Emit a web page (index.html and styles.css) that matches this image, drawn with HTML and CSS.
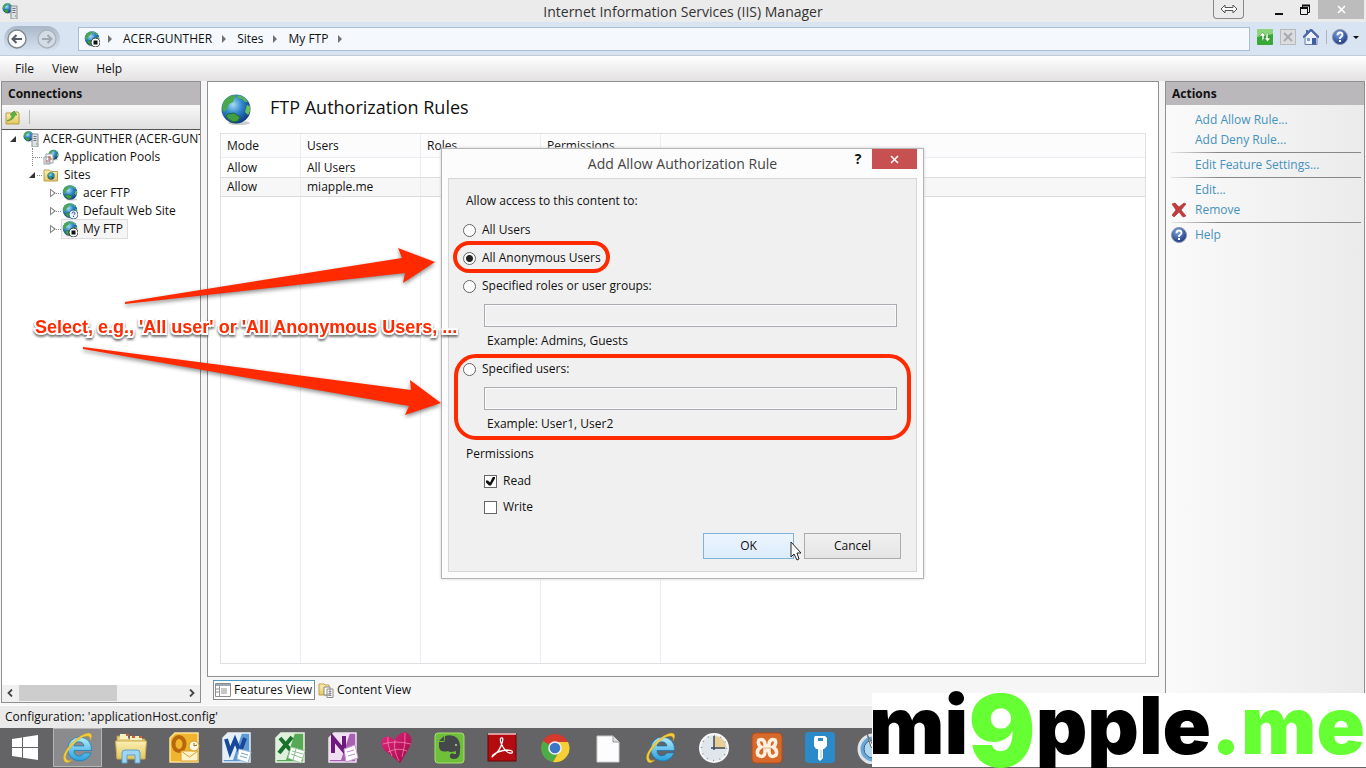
FILE: index.html
```html
<!DOCTYPE html>
<html lang="en">
  <head>
    <meta charset="UTF-8" />
    <meta name="viewport" content="width=device-width, initial-scale=1.0" />
    <title>Internet Information Services (IIS) Manager</title>
    <link rel="stylesheet" href="styles.css">
  </head>
  <body>
    <!-- shared icons -->
    <svg class="sprite" width="0" height="0" aria-hidden="true">
      <defs>
        <radialGradient id="sea" cx="40%" cy="35%" r="70%">
          <stop offset="0" stop-color="#a5dcf5" />
          <stop offset="0.45" stop-color="#2f86cc" />
          <stop offset="1" stop-color="#0c3278" />
        </radialGradient>
        <linearGradient id="ieBlue" x1="0" y1="0" x2="0" y2="1">
          <stop offset="0" stop-color="#b5ecfc" />
          <stop offset="1" stop-color="#25a0dd" />
        </linearGradient>
        <linearGradient id="folderYellow" x1="0" y1="0" x2="0" y2="1">
          <stop offset="0" stop-color="#fbf0b4" />
          <stop offset="1" stop-color="#e4c65c" />
        </linearGradient>
        <radialGradient id="helpBlue" cx="40%" cy="30%" r="75%">
          <stop offset="0" stop-color="#7da3e0" />
          <stop offset="1" stop-color="#17337f" />
        </radialGradient>
        <linearGradient id="heartPink" x1="0" y1="0" x2="1" y2="1">
          <stop offset="0" stop-color="#e2287c" />
          <stop offset="1" stop-color="#a00648" />
        </linearGradient>
      </defs>
      <symbol id="globe" viewBox="0 0 32 32">
        <ellipse cx="19" cy="29" rx="11" ry="2" fill="#aaa" opacity="0.6" />
        <circle cx="16" cy="15" r="14.500" fill="url(#sea)" />
        <path d="M3 9Q7 1 16 1L14 5L13 8L9 10L7 15L4 18L2 15Z" fill="#4aa84a" />
        <path d="M18 1Q26 3 28 8L25 8L22 5L17 4Z" fill="#57b35c" />
        <path d="M27 11L30 12Q31 17 28 21L25 18Z" fill="#6abf58" />
        <path d="M8 20L14 19L20 23L18 27L13 28Q8 26 6 22Z" fill="#3f9f42" stroke="#1d6b3a" />
      </symbol>
      <symbol id="globeStop" viewBox="0 0 16 16">
        <use href="#globe" width="16" height="16" />
        <circle cx="11.500" cy="11.500" r="4.500" fill="#fff" stroke="#333" />
        <rect x="9.500" y="9.500" width="4" height="4" fill="#111" />
      </symbol>
      <symbol id="globeAsk" viewBox="0 0 16 16">
        <use href="#globe" width="16" height="16" />
        <circle cx="11.500" cy="11.500" r="4.500" fill="#eef4ff" stroke="#345a94" />
        <path d="M10 10.500Q10 9 11.500 9T13 10.500Q13 11.200 11.600 12M11.500 13v1" fill="none" stroke="#1e4a94" />
      </symbol>
      <symbol id="server" viewBox="0 0 16 16">
        <use href="#globe" width="11" height="11" />
        <path d="M9 3h6v13H9z" fill="#dfe2e4" stroke="#8a9196" />
        <path d="M10.500 5.500h3M10.500 7.500h3M10.500 9.500h3" stroke="#6c757b" />
        <path d="M13 13h1" stroke="#3a3" />
      </symbol>
      <symbol id="help" viewBox="0 0 16 16">
        <circle cx="8" cy="8" r="7.500" fill="url(#helpBlue)" stroke="#8b94aa" />
        <path d="M5.500 6.200Q5.500 3.500 8 3.500T10.500 6Q10.500 7.300 8 8.700V10" fill="none" stroke="#fff" stroke-width="1.800" />
        <rect x="7" y="11" width="2" height="2" fill="#fff" />
      </symbol>
      <symbol id="ie" viewBox="0 0 32 32">
        <path d="M17 5A12 12 0 1 0 29 21H22Q20 24 16.500 24Q12 23.500 12 18.500H29.500Q30 6 17 5ZM12 14Q13 9.800 17 9.800T22 14Z" fill="url(#ieBlue)" stroke="#1279b4" stroke-width="0.700" />
        <path d="M3 30Q-2 24 9 12Q20 1 27 1Q32 2 28 9Q29 4 25 4Q19 4 10 14Q1 24 5 28Q7 29 10 28Q6 32 3 30Z" fill="#f5cf3a" stroke="#c79a1a" stroke-width="0.400" />
      </symbol>
    </svg>

    <header class="titlebar">
      <svg class="icon16" viewBox="0 0 16 16"><use href="#server" /></svg>
      <h1 class="window-title">Internet Information Services (IIS) Manager</h1>
      <div class="window-controls">
        <button class="resize-tab" aria-label="Resize">
          <svg width="18" height="10" viewBox="0 0 18 10"><path d="M1 5L5 1V3.500H13V1L17 5L13 9V6.500H5V9Z" fill="#fff" stroke="#555" /></svg>
        </button>
        <button class="win-btn" aria-label="Minimize">
          <svg width="10" height="12" viewBox="0 0 10 12"><path d="M1 10h8" stroke="#111" stroke-width="2" /></svg>
        </button>
        <button class="win-btn" aria-label="Restore">
          <svg width="12" height="12" viewBox="0 0 12 12"><path d="M1.500 4.500h7v6h-7zM3.500 4.500v-3h7v7h-2" fill="none" stroke="#111" /><path d="M1 4h8M3 1.500h8" stroke="#111" stroke-width="2" /></svg>
        </button>
        <button class="win-close" aria-label="Close">
          <svg width="9" height="9" viewBox="0 0 9 9"><path d="M1 1l7 7M8 1L1 8" stroke="#fff" stroke-width="1.600" /></svg>
        </button>
      </div>
    </header>

    <nav class="navbar">
      <div class="history">
        <button aria-label="Back">
          <svg width="20" height="20" viewBox="0 0 20 20"><circle cx="10" cy="10" r="9" fill="#fbfcfd" stroke="#80868e" stroke-width="1.400" /><path d="M15 10H6M9.500 6L5.500 10L9.500 14" fill="none" stroke="#555c64" stroke-width="2" /></svg>
        </button>
        <button aria-label="Forward">
          <svg width="20" height="20" viewBox="0 0 20 20"><circle cx="10" cy="10" r="9" fill="#d3dbe5" stroke="#aab2bc" stroke-width="1.400" /><path d="M5 10H14M10.500 6L14.500 10L10.500 14" fill="none" stroke="#a0a8b0" stroke-width="2" /></svg>
        </button>
      </div>
      <div class="address">
        <svg class="icon16" viewBox="0 0 16 16"><use href="#globeStop" /></svg>
        <i class="crumb-arrow"></i><a href="#">ACER-GUNTHER</a>
        <i class="crumb-arrow"></i><a href="#">Sites</a>
        <i class="crumb-arrow"></i><a href="#">My FTP</a>
        <i class="crumb-arrow"></i>
      </div>
      <div class="nav-tools">
        <button aria-label="Refresh">
          <svg class="icon16" viewBox="0 0 16 16"><rect width="16" height="16" rx="1" fill="#38a838" /><path d="M0 0h16v5L0 8z" fill="#8bd47c" /><path d="M5 12V7H2.500L5.500 3L8.500 7H7V9M11 4V9H13.500L10.500 13L7.500 9H9V7" fill="#fff" stroke="#2c8a2c" stroke-width="0.500" /></svg>
        </button>
        <button aria-label="Stop">
          <svg class="icon16" viewBox="0 0 16 16"><rect x="0.500" y="0.500" width="15" height="15" fill="#dadcde" stroke="#b6babf" /><path d="M4 4l8 8M12 4l-8 8" stroke="#a7abaf" stroke-width="2" /></svg>
        </button>
        <button aria-label="Home">
          <svg class="icon16" viewBox="0 0 16 16"><path d="M2 8L8 2L14 8V15.500H2Z" fill="#eef1fa" stroke="#6d7ba4" /><path d="M0 8.500L8 0.500L16 8.500" fill="none" stroke="#4c68ac" stroke-width="2" /><path d="M3 1h2v3H3z" fill="#5068a0" /><path d="M9 9h4v6.500H9z" fill="#3c5ca4" /><path d="M4 9h3v3H4z" fill="#7f9fcc" /></svg>
        </button>
        <i class="tool-sep"></i>
        <button class="help-drop" aria-label="Help">
          <svg class="icon16" viewBox="0 0 16 16"><use href="#help" /></svg>
          <i class="caret"></i>
        </button>
      </div>
    </nav>

    <div class="menubar">
      <a href="#">File</a>
      <a href="#">View</a>
      <a href="#">Help</a>
    </div>

    <main class="workspace">
      <aside class="panel connections">
        <h2 class="panel-head">Connections</h2>
        <div class="panel-tools">
          <button aria-label="Connect">
            <svg width="15" height="15" viewBox="0 0 15 15"><path d="M1 3h6l1-1h5l1 2v10H1z" fill="url(#folderYellow)" stroke="#b99c48" /><path d="M2 11Q7 9 7 5H5L9 1L12 5H10Q9 10 2 11Z" fill="#58b53e" stroke="#388a26" stroke-width="0.500" /></svg>
          </button>
          <i class="tool-sep"></i>
        </div>
        <ul class="tree">
          <li class="root">
            <i class="open"></i><i class="dots"></i>
            <svg class="icon16" viewBox="0 0 16 16"><use href="#server" /></svg>
            <span>ACER-GUNTHER (ACER-GUNTHER)</span>
          </li>
          <li class="level1 leaf">
            <i class="dots"></i>
            <svg class="icon16" viewBox="0 0 16 16"><use href="#globe" x="5" width="11" height="12" /><path d="M3 5h7v9H3zM1 8h6v7H1z" fill="#fafafa" stroke="#94a0a8" /><path d="M5 8h3M5 10h4M3 12h4" stroke="#b65050" /></svg>
            <span>Application Pools</span>
          </li>
          <li class="level1">
            <i class="open"></i><i class="dots"></i>
            <svg class="icon16" viewBox="0 0 16 16"><path d="M1 3h5l2 1.500h6.500V14H1z" fill="url(#folderYellow)" stroke="#bfa050" /><use href="#globe" x="4" y="5" width="8" height="8" /></svg>
            <span>Sites</span>
          </li>
          <li class="level2">
            <i class="closed"></i><i class="dots"></i>
            <svg class="icon16" viewBox="0 0 16 16"><use href="#globe" /></svg>
            <span>acer FTP</span>
          </li>
          <li class="level2">
            <i class="closed"></i><i class="dots"></i>
            <svg class="icon16" viewBox="0 0 16 16"><use href="#globeAsk" /></svg>
            <span>Default Web Site</span>
          </li>
          <li class="level2">
            <i class="closed"></i><i class="dots"></i>
            <div class="selected">
              <svg class="icon16" viewBox="0 0 16 16"><use href="#globeStop" /></svg>
              <span>My FTP</span>
            </div>
          </li>
        </ul>
        <div class="scrollbar">
          <button aria-label="Scroll left"><svg width="7" height="8" viewBox="0 0 7 8"><path d="M5 0.500L1.500 4L5 7.500" fill="none" stroke="#444" stroke-width="1.800" /></svg></button>
          <div class="thumb"></div>
          <button aria-label="Scroll right"><svg width="7" height="8" viewBox="0 0 7 8"><path d="M2 0.500L5.500 4L2 7.500" fill="none" stroke="#444" stroke-width="1.800" /></svg></button>
        </div>
      </aside>

      <section class="center">
        <div class="panel feature">
          <div class="feature-head">
            <svg width="32" height="32" viewBox="0 0 32 32"><use href="#globe" /></svg>
            <h2>FTP Authorization Rules</h2>
          </div>
          <div class="rules-wrap">
            <table class="rules">
              <thead>
                <tr><th class="mode">Mode</th><th class="col">Users</th><th class="col">Roles</th><th class="col">Permissions</th><th></th></tr>
              </thead>
              <tbody>
                <tr><td>Allow</td><td>All Users</td><td></td><td></td><td></td></tr>
                <tr class="picked"><td>Allow</td><td>miapple.me</td><td></td><td></td><td></td></tr>
                <tr class="rest"><td></td><td></td><td></td><td></td><td></td></tr>
              </tbody>
            </table>
          </div>
        </div>
        <div class="tabs">
          <button class="tab active">
            <svg class="icon16" viewBox="0 0 16 16"><path d="M0.500 1.500h15v13H0.500z" fill="#fff" stroke="#8c8c8c" /><path d="M1 3h14" stroke="#9aa8b4" stroke-width="2" /><path d="M4.500 4v10" stroke="#999" /><path d="M6 7h6M6 9h6M6 11h6M1 7h3M1 10h3" stroke="#909090" /></svg>
            Features View
          </button>
          <button class="tab">
            <svg class="icon16" viewBox="0 0 16 16"><path d="M1 2h5l1 1h4v10H1z" fill="url(#folderYellow)" stroke="#bfa050" /><path d="M6 5h6v8H6zM9 7h6v8.500H9z" fill="#fff" stroke="#888" /><path d="M10.500 9.500h3M10.500 11.500h3M10.500 13.500h3" stroke="#888" /></svg>
            Content View
          </button>
        </div>
      </section>

      <aside class="panel actions">
        <h2 class="panel-head">Actions</h2>
        <ul>
          <li><a href="#">Add Allow Rule...</a></li>
          <li><a href="#">Add Deny Rule...</a></li>
          <li class="sep"></li>
          <li><a href="#">Edit Feature Settings...</a></li>
          <li class="sep"></li>
          <li><a href="#">Edit...</a></li>
          <li>
            <svg class="icon16" viewBox="0 0 16 16"><path d="M1 2L4 1L8 5L13 1L15 2L10 8L15 14L12 15L8 10L3 15L1 13L5 8Z" fill="#c43c3c" stroke="#a02828" stroke-width="0.600" /></svg>
            <a href="#">Remove</a>
          </li>
          <li class="sep"></li>
          <li>
            <svg class="icon16" viewBox="0 0 16 16"><use href="#help" /></svg>
            <a href="#">Help</a>
          </li>
        </ul>
      </aside>
    </main>

    <div class="statusbar">Configuration: 'applicationHost.config'</div>

    <footer class="taskbar">
      <button aria-label="Start"><svg width="28" height="26" viewBox="0 0 28 26"><path d="M1 4L11 2.500V12H1ZM12 2.300L27 0V12H12ZM1 13H11V22.500L1 21ZM12 13H27V25L12 22.700Z" fill="#fff" /></svg></button>
      <button class="active" aria-label="Internet Explorer"><svg class="icon32" viewBox="0 0 32 32"><use href="#ie" /></svg></button>
      <button aria-label="Explorer"><svg class="icon32" viewBox="0 0 32 32"><path d="M2 4h10l2 3h16v19H2z" fill="#e9d27c" stroke="#b59a48" /><path d="M5 2h8v5H5zM15 4h12v4H15z" fill="#f7f0c4" /><path d="M11 3h3M17 5h3M24 5h3" stroke="#d0602c" stroke-width="2" /><path d="M0.500 9h31L30 27H2z" fill="url(#folderYellow)" stroke="#c9ac54" /><path d="M7 31V21Q7 18 10 18H22Q25 18 25 21V31H20V23H12V31Z" fill="#9fd4f2" stroke="#5ba4cc" /></svg></button>
      <button aria-label="Outlook"><svg class="icon32" viewBox="0 0 32 32"><path d="M2 6L7 1H30V30H2Z" fill="#f0b52c" stroke="#ffe49a" stroke-width="1.500" /><ellipse cx="11" cy="12" rx="5.500" ry="7" fill="none" stroke="#b8680a" stroke-width="4" /><path d="M13 19h17v10H13z" fill="#fff3c8" stroke="#dba130" /><path d="M13 19l8.500 6L30 19" fill="none" stroke="#dba130" /><circle cx="26" cy="14" r="5" fill="#fff8e0" stroke="#d59b22" /><path d="M26 11v3l3-1" fill="none" stroke="#a06c10" /></svg></button>
      <button aria-label="Word"><svg class="icon32" viewBox="0 0 32 32"><path d="M2 6L7 1H29V30H2Z" fill="#5f9ad4" stroke="#e6f1fb" stroke-width="1.500" /><path d="M2 6L7 1H21L12 28H2Z" fill="#e4effa" /><path d="M5 7L9 20L14 8L19 20L24 6" fill="none" stroke="#18489a" stroke-width="4" /><path d="M18 17l12 3-3 11-11-4z" fill="#fff" stroke="#9bbcdf" /><path d="M20 21l7 2M19 24l7 2" stroke="#7aa5d4" /></svg></button>
      <button aria-label="Excel"><svg class="icon32" viewBox="0 0 32 32"><path d="M2 6L7 1H30V30H2Z" fill="#57a956" stroke="#e7f6e4" stroke-width="1.500" /><path d="M2 6L7 1H21L12 28H2Z" fill="#dff0db" /><path d="M6 6L19 21M18 5L5 21" fill="none" stroke="#16742a" stroke-width="4" /><path d="M17 15l14 4-4 12-13-5z" fill="#fff" stroke="#9cc99a" /><path d="M18 19l11 3M17 22l11 4M22 17l-3 11" stroke="#8cc08a" /></svg></button>
      <button aria-label="OneNote"><svg class="icon32" viewBox="0 0 32 32"><path d="M2 6L7 1H29V30H2Z" fill="#a861b2" stroke="#f3e4f5" stroke-width="1.500" /><path d="M2 6L7 1H23L14 28H2Z" fill="#efdff1" /><path d="M6 21V6L17 19V4" fill="none" stroke="#6d1a7c" stroke-width="4" /><path d="M17 17l11-4 3 13-12 4z" fill="#fff" stroke="#c898d0" /><path d="M20 20l7-2M21 24l7-2" stroke="#c08ac8" /></svg></button>
      <button aria-label="Heart"><svg class="icon32" viewBox="0 0 32 32"><path d="M20 31Q12 24 4 18Q-1 11 3 6Q9 2 15 8Q17 1 26 0Q33 4 31 12Q27 20 20 31Z" fill="url(#heartPink)" /><path d="M3 12Q15 8 31 12M8 20Q18 15 27 19M15 8Q13 18 19 29M8 5Q7 13 12 24M25 1Q26 12 22 25" fill="none" stroke="#ffa6cc" stroke-width="0.600" /></svg></button>
      <button aria-label="Evernote"><svg class="icon32" viewBox="0 0 32 32"><rect x="2" y="1" width="29" height="30" rx="3" fill="#70bf3a" stroke="#a5e070" /><path d="M12 4Q20 2 24 6Q28 10 27 19Q27 27 21 27Q16 27 17 23Q18 20 21 22H23V19Q17 21 15 19Q7 21 6 15V10H11Q12 9 12 4Z" fill="#44484a" /><path d="M6 9L11 4V9Z" fill="#44484a" /><path d="M22 13h2" stroke="#bcd8a8" stroke-width="1.500" /></svg></button>
      <button aria-label="Adobe Reader"><svg class="icon32" viewBox="0 0 32 32"><rect x="2" y="2" width="28" height="27" fill="#b30b10" stroke="#6d0508" /><path d="M2 2h28" stroke="#f4c8c8" stroke-width="1.500" /><path d="M7 24Q14 19 16 11Q18 5 15 6Q13 8 17 15Q21 22 26 21Q28 18 20 18Q12 19 7 23Q5 26 7 24Z" fill="none" stroke="#fff" stroke-width="1.300" /></svg></button>
      <button aria-label="Chrome"><svg class="icon32" viewBox="0 0 32 32"><circle cx="16" cy="16" r="14" fill="#d63a2c" /><path d="M4 9A14 14 0 0 0 14 30L20 20L16 16Z" fill="#4bac48" /><path d="M29 10A14 14 0 0 1 14 30L21 18L17 10Z" fill="#f6cf35" /><circle cx="16" cy="16" r="6.800" fill="#f2f2f2" /><circle cx="16" cy="16" r="5.300" fill="#3c77c6" /></svg></button>
      <button aria-label="Document"><svg class="icon32" viewBox="0 0 32 32"><path d="M5 4H21L27 10V30H5Z" fill="#fdfdfd" stroke="#ccc" /><path d="M21 4V10H27" fill="#ddd" stroke="#999" /></svg></button>
      <button aria-label="Internet Explorer desktop"><svg class="icon32" viewBox="0 0 32 32"><use href="#ie" /></svg></button>
      <button aria-label="Clock"><svg class="icon32" viewBox="0 0 32 32"><circle cx="16" cy="16" r="14" fill="#dfe7ec" stroke="#f8f8f8" stroke-width="2" /><circle cx="16" cy="16" r="12.500" fill="none" stroke="#8d989f" stroke-width="1.500" stroke-dasharray="1 5.500" /><path d="M16 16V4A12 12 0 0 1 28 16Z" fill="#e8cf98" /><path d="M16 4V18M13 16H27" stroke="#3c4a54" stroke-width="1.500" /></svg></button>
      <button aria-label="XAMPP"><svg class="icon32" viewBox="0 0 32 32"><rect x="1" y="1" width="30" height="30" rx="4" fill="#d9692a" stroke="#b04e18" /><path d="M8 8Q13 6 14 12V14H18V12Q19 6 24 8Q26 12 22 15Q27 18 25 23Q19 27 18 20V18H14V20Q13 27 7 23Q5 18 10 15Q6 12 8 8Z" fill="none" stroke="#fff0df" stroke-width="3.500" /></svg></button>
      <button aria-label="Password manager"><svg class="icon32" viewBox="0 0 32 32"><rect x="1" y="0" width="30" height="31" rx="4" fill="#2b8bca" /><path d="M11 4H21L23 6V14L20 17H19V26L16 29L14 27V17H12L10 14V6Z" fill="#fff" /><rect x="14" y="6" width="5" height="3" fill="#2b8bca" /><path d="M17 18v8" stroke="#9cc6e4" /></svg></button>
      <button aria-label="Safari"><svg class="icon32" viewBox="0 0 32 32"><circle cx="16" cy="17" r="14" fill="#6aa7d6" stroke="#dfe4e8" stroke-width="3" /><circle cx="16" cy="17" r="9" fill="#b6d8ee" stroke="#2f6699" /><path d="M10 2L20 21L14 15Z" fill="#f2f4f5" stroke="#666" /></svg></button>
    </footer>

    <form class="dialog">
      <div class="dialog-title">
        <h2>Add Allow Authorization Rule</h2>
        <button type="button" class="dialog-help" aria-label="What's this">?</button>
        <button type="button" class="dialog-close" aria-label="Close dialog">
          <svg width="9" height="9" viewBox="0 0 9 9"><path d="M1 1l7 7M8 1L1 8" stroke="#fff" stroke-width="1.600" /></svg>
        </button>
      </div>
      <div class="dialog-body">
        <p>Allow access to this content to:</p>
        <label class="choice first"><input type="radio" name="who"> All Users</label>
        <label class="choice"><input type="radio" name="who" checked> All Anonymous Users</label>
        <label class="choice"><input type="radio" name="who"> Specified roles or user groups:</label>
        <div class="sub">
          <input type="text" aria-label="Specified roles or user groups" disabled>
          <p>Example: Admins, Guests</p>
        </div>
        <label class="choice"><input type="radio" name="who"> Specified users:</label>
        <div class="sub">
          <input type="text" aria-label="Specified users" disabled>
          <p>Example: User1, User2</p>
        </div>
        <p class="perm-title">Permissions</p>
        <div class="perms">
          <label class="choice"><input type="checkbox" checked> Read</label>
          <label class="choice"><input type="checkbox"> Write</label>
        </div>
        <div class="dialog-buttons">
          <button type="button" class="ok">OK</button>
          <button type="button" class="cancel">Cancel</button>
        </div>
      </div>
    </form>

    <!-- arrows, rings and pointer drawn over the windows -->
    <svg class="marks" width="1366" height="768" viewBox="0 0 1366 768" aria-hidden="true">
      <g class="arrows">
        <path d="M125 302L402 258L398 248L435 262L403 283L405 273L125 304Z" />
        <path d="M83 347L411 390L410 380L441 403L405 415L409 406L83 349Z" />
      </g>
      <g fill="none" stroke="#ff2a00" stroke-width="4">
        <rect x="455" y="243" width="153" height="28" rx="14" />
        <rect x="456" y="356" width="453" height="82" rx="20" />
      </g>
      <path d="M791 542V557L794 554L797 560L799 559L797 553H801Z" fill="#fff" stroke="#222" />
    </svg>
    <p class="callout">Select, e.g., 'All user' or 'All Anonymous Users, ...</p>

    <div class="brand">
      <svg width="494" height="74" viewBox="0 0 494 74">
        <text class="wordmark" x="-3" y="61">mi<tspan class="nine" dy="13">9</tspan><tspan dy="-13">pple</tspan><tspan class="green">.me</tspan></text>
      </svg>
    </div>
  </body>
</html>
```
FILE: styles.css
```css
* {
  box-sizing: border-box;
}
body {
  display: flex;
  flex-direction: column;
  height: 100vh;
  margin: 0;
  overflow: hidden;
  position: relative;
  background: #f6f6f7;
  color: #111;
  font-family: "Open Sans", "Noto Sans", sans-serif;
  font-size: 12px;
  line-height: 18px;
}
h1,
h2,
p,
ul {
  margin: 0;
  padding: 0;
  font-weight: normal;
}
ul {
  list-style: none;
}
a {
  color: inherit;
  text-decoration: none;
}
button {
  display: flex;
  align-items: center;
  justify-content: center;
  padding: 0;
  border: 0;
  background: none;
  color: inherit;
  font: inherit;
}
svg {
  display: block;
  flex-shrink: 0;
}
.sprite {
  position: absolute;
}
.icon16 {
  width: 16px;
  height: 16px;
}
.icon32 {
  width: 32px;
  height: 32px;
}

/* title bar */
.titlebar {
  display: grid;
  grid-template-columns: 1fr auto 1fr;
  height: 22px;
  padding: 0 2px;
  background: #ebebeb;
}
.titlebar > .icon16 {
  margin-top: 3px;
}
.window-title {
  font-size: 14px;
  line-height: 24px;
  color: #333;
}
.window-controls {
  display: flex;
  justify-content: flex-end;
  height: 19px;
}
.resize-tab {
  width: 31px;
  margin-right: 22px;
  border: 1px solid #888;
  border-top: 0;
  border-radius: 0 0 4px 4px;
}
.win-btn {
  width: 26px;
}
.win-close {
  width: 46px;
  background: #bcbcbc;
}

/* navigation */
.navbar {
  display: flex;
  align-items: center;
  height: 33px;
  background: #d8e4f1;
}
.history {
  display: flex;
  justify-content: space-between;
  width: 56px;
  height: 26px;
  margin: 0 18px 0 4px;
  padding: 3px;
  border-radius: 13px;
  background: linear-gradient(#a9b7c8, #d8e4f1);
}
.address {
  display: flex;
  flex: 1;
  align-items: center;
  gap: 10px;
  height: 24px;
  padding: 0 5px;
  border: 1px solid #a9bcd6;
  background: #f5f9fe;
}
.crumb-arrow {
  margin-right: 1px;
  border: 4px solid transparent;
  border-left: 4px solid #707070;
  border-right: 0;
}
.address .icon16 {
  margin-right: -2px;
}
.nav-tools {
  display: flex;
  align-items: center;
  gap: 7px;
  padding: 0 7px 3px 7px;
}
.tool-sep {
  width: 1px;
  height: 14px;
  background: #b4b4b4;
}
.help-drop {
  gap: 5px;
  margin-left: -2px;
}
.caret {
  border: 3px solid transparent;
  border-top: 3px solid #111;
  border-bottom: 0;
}
.menubar {
  display: flex;
  align-items: center;
  gap: 18px;
  height: 26px;
  padding: 0 15px;
  border-top: 1px solid #c3ccd6;
  background: linear-gradient(#fff, #e3e1e2);
}

/* panels */
.workspace {
  display: flex;
  flex: 1;
  gap: 6px;
  min-height: 0;
  padding: 0 1px 2px;
}
.panel {
  border: 1px solid #909092;
  background: #fff;
}
.panel-head {
  height: 23px;
  padding: 0 6px;
  background: #bab8bb;
  font-size: 12px;
  font-weight: bold;
  line-height: 23px;
}
.connections {
  display: flex;
  flex-direction: column;
  width: 200px;
}
.panel-tools {
  display: flex;
  align-items: center;
  gap: 9px;
  height: 25px;
  padding: 0 3px;
  border-bottom: 1px solid #555;
  background: linear-gradient(#f8f8f8, #e0dfe0);
}
.tree {
  flex: 1;
  overflow: hidden;
  padding-left: 8px;
}
.tree li {
  display: flex;
  align-items: center;
  height: 18px;
  white-space: nowrap;
}
.tree span {
  margin-left: 5px;
}
.tree .root .icon16 {
  margin-left: 4px;
}
.tree .root span {
  margin-left: 4px;
}
.tree .level1 {
  padding-left: 19px;
}
.tree .leaf {
  padding-left: 22px;
}
.tree .leaf::before {
  align-self: stretch;
  border-left: 1px dotted #888;
  content: "";
}
.tree .level2 {
  padding-left: 40px;
}
.tree .dots {
  width: 5px;
  margin-right: 1px;
  border-top: 1px dotted #888;
}
.tree .leaf .dots {
  width: 9px;
}
.tree .open {
  width: 0;
  margin-right: 2px;
  border-bottom: 6px solid #333;
  border-left: 6px solid transparent;
}
.tree .closed {
  width: 6px;
  height: 9px;
  background: #888;
  clip-path: polygon(evenodd, 0 0, 100% 50%, 0 100%, 0 0, 1px 2px, 4px 50%, 1px 7px, 1px 2px, 0 0);
}
.selected {
  display: flex;
  align-items: center;
  height: 18px;
  padding-right: 4px;
  outline: 1px solid #ddd;
  background: #f5f5f5;
}
.scrollbar {
  display: flex;
  height: 17px;
  padding-bottom: 1px;
  background: #f0f0f0;
}
.scrollbar button {
  width: 17px;
}
.thumb {
  width: 98px;
  margin-right: auto;
  background: #cdcdcd;
}

/* feature pane */
.center {
  display: flex;
  flex: 1;
  flex-direction: column;
  min-width: 0;
}
.feature {
  display: flex;
  flex: 1;
  flex-direction: column;
  padding: 12px;
}
.feature-head {
  display: flex;
  gap: 18px;
  height: 39px;
}
.feature-head h2 {
  font-size: 18px;
  line-height: 26px;
}
.rules-wrap {
  flex: 1;
  border: 1px solid #e0e0e4;
}
.rules {
  width: 100%;
  height: 100%;
  table-layout: fixed;
  border-collapse: separate;
  border-spacing: 0;
}
.rules th {
  height: 24px;
  border-bottom: 1px solid #ecedf2;
  background: #fcfcfd;
  font-weight: normal;
}
.rules th,
.rules td {
  padding: 0 6px;
  border-right: 1px solid #e9ecf4;
  text-align: left;
}
.rules th:last-child,
.rules td:last-child {
  border-right: 0;
}
.rules .mode {
  width: 80px;
}
.rules .col {
  width: 120px;
}
.rules tbody td {
  height: 19px;
}
.rules .picked td {
  border-top: 1px solid #dcdcdc;
  border-bottom: 1px solid #dcdcdc;
  background: #f7f7f7;
}
.rules tbody .rest td {
  height: auto;
}
.tabs {
  display: flex;
  gap: 2px;
  padding: 3px 0 3px 6px;
}
.tab {
  gap: 3px;
  height: 20px;
  padding: 0 1px;
}
.tab.active {
  padding: 0 2px 0 1px;
  border: 1px solid #888;
  border-top-color: #4a9cc4;
  background: #fff;
}

/* actions */
.actions {
  width: 200px;
  background: linear-gradient(90deg, #fafafa, #ebebeb);
}
.actions ul {
  padding: 5px 3px 0 5px;
}
.actions li {
  display: flex;
  align-items: center;
  height: 20px;
  color: #4692bb;
}
.actions li a {
  margin-left: 8px;
}
.actions li a:first-child {
  margin-left: 24px;
}
.actions .sep {
  height: 1px;
  margin: 2px 0;
  background: linear-gradient(90deg, #e6e6e6, #888 25%);
}

.statusbar {
  height: 23px;
  padding: 0 5px;
  border-top: 1px solid #fff;
  background: #ebeaea;
  line-height: 22px;
}
.taskbar {
  display: flex;
  gap: 4px;
  height: 40px;
  overflow: hidden;
  background: #646366;
}
.taskbar button {
  flex-shrink: 0;
  width: 49px;
}
.taskbar .active {
  height: 39px;
  border: 1px solid #b5b5b5;
  background: #8b8b8d;
}

/* dialog window */
.dialog {
  position: absolute;
  top: 148px;
  left: 441px;
  width: 483px;
  padding: 0 6px 6px;
  border: 1px solid #b4b4b4;
  background: #fcfcfc;
  box-shadow: 0 0 3px #ccc;
}
.dialog-title {
  display: grid;
  grid-template-columns: 1fr auto 1fr;
  height: 29px;
}
.dialog-title h2 {
  grid-column: 2;
  font-size: 14px;
  line-height: 30px;
  color: #444;
}
.dialog-title button {
  grid-row: 1;
  grid-column: 3;
  justify-self: end;
  width: 45px;
  height: 20px;
}
.dialog-title .dialog-help {
  width: 28px;
  margin-right: 45px;
  font-size: 14px;
  font-weight: bold;
}
.dialog-close {
  background: #c75050;
}
.dialog-body {
  padding: 13px 15px 12px 14px;
  border: 1px solid #d6d6d6;
  background: #f0f0f0;
}
.dialog-body > p {
  padding-left: 3px;
}
.choice {
  display: flex;
  align-items: center;
  gap: 6px;
  height: 18px;
  margin-top: 10px;
}
.choice.first {
  margin-top: 11px;
}
.choice input {
  appearance: none;
  width: 13px;
  height: 13px;
  margin: 0;
  border: 1px solid #666;
  background: #fff;
}
.choice input[type="radio"] {
  border-radius: 50%;
}
.choice input[type="radio"]:checked {
  background: radial-gradient(#222 3px, #fff 4px);
}
.choice input[type="checkbox"]:checked::before {
  display: block;
  width: 9px;
  height: 9px;
  margin: 1px;
  background: #111;
  clip-path: polygon(0 4px, 2px 4px, 4px 6px, 7px 0, 9px 0, 9px 2px, 5px 9px, 3px 9px, 0 6px);
  content: "";
}
.sub {
  padding: 9px 4px 0 21px;
}
.sub input {
  display: block;
  width: 100%;
  height: 23px;
  margin-bottom: 5px;
  border: 1px solid #aaabb0;
  background: #f0f0f0;
  box-shadow: inset 0 0 0 1px #fafafa;
}
.sub p {
  padding-left: 3px;
}
.dialog-body > .perm-title {
  margin-top: 12px;
}
.perms {
  padding: 1px 0 0 21px;
}
.perms .choice {
  margin-top: 8px;
}
.dialog-buttons {
  display: flex;
  justify-content: flex-end;
  gap: 10px;
  margin-top: 17px;
}
.dialog-buttons button {
  width: 97px;
  height: 26px;
  border: 1px solid #acacac;
  background: linear-gradient(#f0f0f0, #e5e5e5);
}
.dialog-buttons .ok {
  width: 91px;
  border-color: #7eb4dc;
  background: linear-gradient(#ecf4fd, #dcecfc);
}

/* drawn on top */
.marks {
  position: absolute;
  top: 0;
  left: 0;
  pointer-events: none;
}
.arrows {
  fill: #ff2a00;
  filter: drop-shadow(0 2px 2px #0007);
}
.callout {
  position: absolute;
  top: 316px;
  left: 35px;
  color: #ff2a00;
  font-family: "Liberation Sans", Arial, sans-serif;
  font-size: 18px;
  font-weight: bold;
  line-height: 22px;
  white-space: nowrap;
  -webkit-text-stroke: 4px #fff;
  paint-order: stroke fill;
  filter: drop-shadow(0 2px 1px #0008);
}
.brand {
  position: absolute;
  right: 0;
  bottom: 1px;
  background: #fff;
}
.brand svg {
  overflow: visible;
}
.wordmark {
  font-family: "Inter", sans-serif;
  font-size: 80px;
  font-weight: 900;
  fill: #000;
}
.wordmark .green {
  fill: #66ff33;
}
.wordmark .nine {
  font-size: 100px;
  fill: #66ff33;
}
```
